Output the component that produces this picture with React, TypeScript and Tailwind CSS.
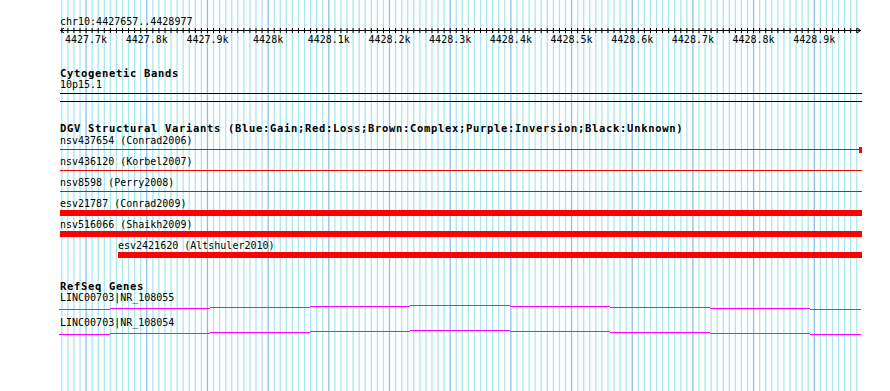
import React from "react";

const START = 4427657;
const END = 4428977;
const X0 = 60;
const SCALE = 801 / (END - START);
const rel = (bp: number) => (bp - START) * SCALE;

const minorBps: number[] = [];
for (let bp = 4427660; bp <= 4428970; bp += 10) minorBps.push(bp);
const majorBps: number[] = [];
for (let bp = 4427700; bp <= 4428900; bp += 100) majorBps.push(bp);

const fmt = (bp: number) => {
  const k = bp / 1000;
  const s = Number.isInteger(k) ? String(k) : k.toFixed(1);
  return s + "k";
};

const MONO = "'DejaVu Sans Mono', monospace";

function Grid() {
  return (
    <svg
      className="absolute left-0 top-0 pointer-events-none"
      width={890}
      height={391}
    >
      {minorBps.map((bp) => (
        <line
          key={bp}
          x1={X0 + rel(bp)}
          x2={X0 + rel(bp)}
          y1={0}
          y2={391}
          stroke={bp % 100 === 0 ? "#86c3ea" : "#a9e8ed"}
          strokeWidth={1.3}
        />
      ))}
    </svg>
  );
}

function Ruler() {
  return (
    <svg className="block overflow-visible" width={802} height={20}>
      <rect x={0} y={2} width={801} height={1} fill="#000" />
      {minorBps.map((bp) => (
        <line
          key={bp}
          x1={rel(bp)}
          x2={rel(bp)}
          y1={0}
          y2={5}
          stroke="#000"
          strokeWidth={1}
        />
      ))}
      <polyline
        points="4,0 0.5,2.5 4,5"
        fill="none"
        stroke="#000"
        strokeWidth={1}
      />
      <polyline
        points="797,0 800.5,2.5 797,5"
        fill="none"
        stroke="#000"
        strokeWidth={1}
      />
      {majorBps.map((bp) => (
        <text
          key={bp}
          x={rel(bp)}
          y={15}
          textAnchor="middle"
          fontSize={10}
          fontFamily={MONO}
          fill="#000"
        >
          {fmt(bp)}
        </text>
      ))}
    </svg>
  );
}

type Variant = {
  label: string;
  kind: "line" | "linebox" | "bar";
  start: number; // px offset from track start
};

const variants: Variant[] = [
  { label: "nsv437654 (Conrad2006)", kind: "linebox", start: 0 },
  { label: "nsv436120 (Korbel2007)", kind: "line", start: 0 },
  { label: "nsv8598 (Perry2008)", kind: "line", start: 0 },
  { label: "esv21787 (Conrad2009)", kind: "bar", start: 0 },
  { label: "nsv516066 (Shaikh2009)", kind: "bar", start: 0 },
  { label: "esv2421620 (Altshuler2010)", kind: "bar", start: 58 },
];

function VariantRow({ v }: { v: Variant }) {
  return (
    <div className="h-[21px] flex flex-col">
      <div
        className={
          "h-[12px] text-[10px] leading-[12px] whitespace-nowrap " +
          (v.start ? "pl-[58px]" : "")
        }
      >
        {v.label}
      </div>
      <svg className="block overflow-visible" width={802} height={9}>
        {v.kind === "bar" ? (
          <rect x={v.start} y={0} width={802 - v.start} height={6} fill="#ff0000" />
        ) : (
          <rect x={0} y={2} width={802} height={1} fill="#ff0000" />
        )}
        {v.kind === "linebox" && (
          <rect x={799} y={0} width={3} height={6} fill="#ff0000" />
        )}
      </svg>
    </div>
  );
}

const geneSteps: [number, number, number][] = [
  [-1, 50, 5],
  [50, 150, 4],
  [150, 250, 3],
  [250, 350, 2],
  [350, 450, 1],
  [450, 550, 2],
  [550, 650, 3],
  [650, 750, 4],
  [750, 801, 5],
];

function GeneRow({ label }: { label: string }) {
  return (
    <div className="h-[25px] flex flex-col">
      <div className="h-[12px] text-[10px] leading-[12px] whitespace-nowrap">
        {label}
      </div>
      <svg className="block overflow-visible" width={802} height={13}>
        {geneSteps.map(([a, b, y]) => (
          <rect key={a} x={a} y={y} width={b - a} height={1} fill="#ff00ff" />
        ))}
      </svg>
    </div>
  );
}

export default function App() {
  return (
    <div className="relative w-[890px] h-[391px] overflow-hidden bg-white text-black font-['DejaVu_Sans_Mono',monospace]">
      <Grid />
      <div className="relative ml-[60px] w-[802px] flex flex-col">
        {/* Ruler */}
        <div className="pt-[16px] h-[28px] text-[10px] leading-[12px] whitespace-nowrap">
          chr10:4427657..4428977
        </div>
        <Ruler />

        {/* Cytogenetic Bands */}
        <div className="mt-[21px] h-[8px] leading-[8px] text-[10.5px] font-bold tracking-[0.68px] whitespace-nowrap">
          Cytogenetic Bands
        </div>
        <div className="mt-[4px] h-[8px] leading-[8px] text-[10px] whitespace-nowrap">
          10p15.1
        </div>
        <svg className="block" width={802} height={15}>
          <rect x={0} y={4} width={802} height={1} fill="#000" />
          <rect x={0} y={12} width={802} height={1} fill="#000" />
        </svg>

        {/* DGV */}
        <div className="mt-[18px] h-[13px] leading-[13px] text-[10.5px] font-bold tracking-[0.68px] whitespace-nowrap">
          DGV Structural Variants (Blue:Gain;Red:Loss;Brown:Complex;Purple:Inversion;Black:Unknown)
        </div>
        {variants.map((v) => (
          <VariantRow key={v.label} v={v} />
        ))}

        {/* RefSeq */}
        <div className="mt-[19px] h-[12px] leading-[12px] text-[10.5px] font-bold tracking-[0.68px] whitespace-nowrap">
          RefSeq Genes
        </div>
        <GeneRow label="LINC00703|NR_108055" />
        <GeneRow label="LINC00703|NR_108054" />
      </div>
    </div>
  );
}
